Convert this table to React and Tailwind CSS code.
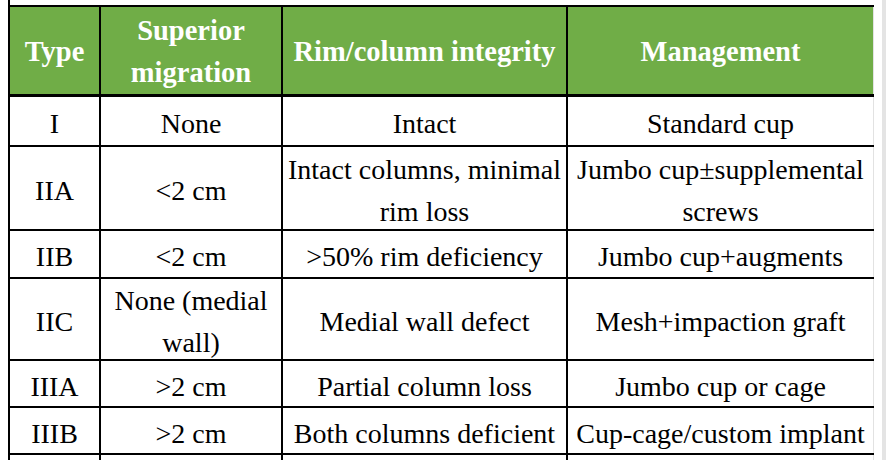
const cols = ['w-[93px] border-l-2', 'w-[182px]', 'w-[285px]', 'w-[306px]']

const rows = [
  { h: 'h-[50px]', cells: ['I', 'None', 'Intact', 'Standard cup'] },
  { h: 'h-[84px]', cells: ['IIA', '<2 cm', ['Intact columns, minimal', 'rim loss'], ['Jumbo cup±supplemental', 'screws']] },
  { h: 'h-[48px]', cells: ['IIB', '<2 cm', '>50% rim deficiency', 'Jumbo cup+augments'] },
  { h: 'h-[82px]', cells: ['IIC', ['None (medial', 'wall)'], 'Medial wall defect', 'Mesh+impaction graft'] },
  { h: 'h-[47px]', cells: ['IIIA', '>2 cm', 'Partial column loss', 'Jumbo cup or cage'] },
  { h: 'h-[47px]', cells: ['IIIB', '>2 cm', 'Both columns deficient', 'Cup-cage/custom implant'] },
]

function Text({ value, className = '' }) {
  const lines = Array.isArray(value) ? value : [value]
  return (
    <div className={`flex flex-col items-center ${className}`}>
      {lines.map((l, i) => <span key={i} className="whitespace-nowrap">{l}</span>)}
    </div>
  )
}

function Cell({ i, children }) {
  const edge = i === 3 ? 'border-r border-r-[#e2e2e2]' : 'border-r-2 border-r-black'
  return (
    <div className={`${cols[i]} ${edge} border-l-black shrink-0 flex items-center justify-center`}>
      {children}
    </div>
  )
}

export default function App() {
  return (
    <div className="w-[886px] h-[460px] bg-white flex overflow-hidden text-black text-[28px] leading-[42px] font-['Liberation_Serif']">
      <div className="pl-2 w-[874px] flex flex-col">
        <div className="h-[5px] border-l-2 border-black shrink-0" />

        <div className="flex h-[92px] shrink-0 border-t-2 border-b-[3px] border-black bg-[#70ad47] text-white font-bold text-[28.5px]">
          <Cell i={0}><Text value="Type" className="pt-[2px]" /></Cell>
          <Cell i={1}><Text value={['Superior', 'migration']} className="pt-[2px]" /></Cell>
          <Cell i={2}><Text value="Rim/column integrity" className="pt-[2px]" /></Cell>
          <Cell i={3}><Text value="Management" className="pt-[2px]" /></Cell>
        </div>

        {rows.map((r, ri) => (
          <div key={ri} className={`flex ${r.h} shrink-0 border-b-2 border-black`}>
            {r.cells.map((c, ci) => (
              <Cell key={ci} i={ci}><Text value={c} className="pt-[6px]" /></Cell>
            ))}
          </div>
        ))}

        <div className="flex flex-1">
          {[0, 1, 2, 3].map(i => <Cell key={i} i={i} />)}
        </div>
      </div>
      <div className="ml-auto w-1 bg-[#e4e4e4]" />
    </div>
  )
}
